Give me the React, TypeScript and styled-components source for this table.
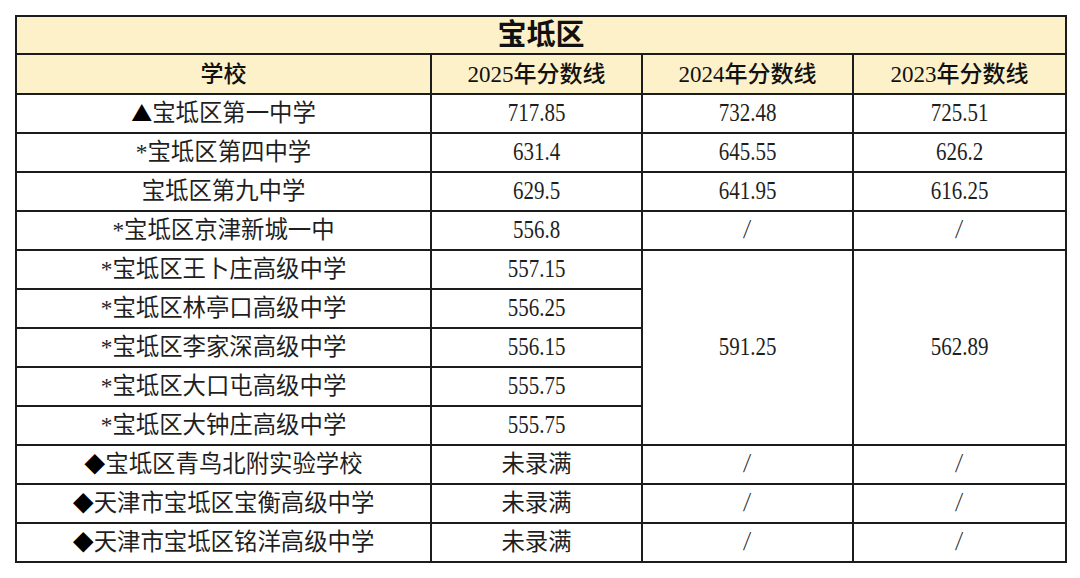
import React from "react";
import styled, { createGlobalStyle } from "styled-components";

const GlobalStyle = createGlobalStyle`
  html, body { margin: 0; padding: 0; background: #ffffff; }
  body { font-family: "Liberation Serif", "Noto Sans CJK SC", serif; }
`;

const Page = styled.div`
  padding: 15px 0 0 15px;
`;

const Table = styled.table`
  border-collapse: collapse;
  table-layout: fixed;
  width: 1050px;
  border: 2px solid #1c1c1c;
`;

const Col = styled.col<{ $w: number }>`
  width: ${(p) => p.$w}px;
`;

const Cell = styled.td`
  border: 2px solid #1c1c1c;
  height: 37px;
  padding: 0;
  text-align: center;
  vertical-align: middle;
  font-size: 23.4px;
  color: #1f1f1f;
  line-height: 1;
  white-space: nowrap;
`;

const Num = styled.span<{ $slash?: boolean }>`
  display: inline-block;
  font-size: ${(p) => (p.$slash ? 22 : 21)}px;
  transform: translateY(-2px) scaleY(1.24) ${(p) => (p.$slash ? "skewX(-8deg)" : "")};
`;

const Mark = styled.span`
  font-family: "Noto Sans CJK SC", sans-serif;
  font-size: 21px;
  color: #000;
`;

const TitleCell = styled.th`
  border: 2px solid #1c1c1c;
  background: #fdf1c9;
  height: 36px;
  padding: 0;
  font-size: 29px;
  font-weight: 700;
  color: #111;
  line-height: 1;
`;

const HeadCell = styled.th`
  border: 2px solid #1c1c1c;
  background: #fdf1c9;
  height: 38px;
  padding: 0;
  font-size: 23px;
  font-weight: 500;
  color: #111;
  line-height: 1;
  white-space: nowrap;
`;

type Row = { mark?: string; name: string; y25: string; y24?: string; y23?: string };

const rows: Row[] = [
  { mark: "▲", name: "宝坻区第一中学", y25: "717.85", y24: "732.48", y23: "725.51" },
  { name: "*宝坻区第四中学", y25: "631.4", y24: "645.55", y23: "626.2" },
  { name: "宝坻区第九中学", y25: "629.5", y24: "641.95", y23: "616.25" },
  { name: "*宝坻区京津新城一中", y25: "556.8", y24: "/", y23: "/" },
  { name: "*宝坻区王卜庄高级中学", y25: "557.15" },
  { name: "*宝坻区林亭口高级中学", y25: "556.25" },
  { name: "*宝坻区李家深高级中学", y25: "556.15" },
  { name: "*宝坻区大口屯高级中学", y25: "555.75" },
  { name: "*宝坻区大钟庄高级中学", y25: "555.75" },
  { mark: "◆", name: "宝坻区青鸟北附实验学校", y25: "未录满", y24: "/", y23: "/" },
  { mark: "◆", name: "天津市宝坻区宝衡高级中学", y25: "未录满", y24: "/", y23: "/" },
  { mark: "◆", name: "天津市宝坻区铭洋高级中学", y25: "未录满", y24: "/", y23: "/" },
];

const isNumeric = (v: string) => /^[\d./]+$/.test(v);

function Value({ v }: { v: string }) {
  return isNumeric(v) ? <Num $slash={v === "/"}>{v}</Num> : <>{v}</>;
}

export default function App() {
  return (
    <Page>
      <GlobalStyle />
      <Table>
        <colgroup>
          <Col $w={415} />
          <Col $w={211} />
          <Col $w={211} />
          <Col $w={213} />
        </colgroup>
        <thead>
          <tr>
            <TitleCell colSpan={4}>宝坻区</TitleCell>
          </tr>
          <tr>
            <HeadCell>学校</HeadCell>
            <HeadCell>2025年分数线</HeadCell>
            <HeadCell>2024年分数线</HeadCell>
            <HeadCell>2023年分数线</HeadCell>
          </tr>
        </thead>
        <tbody>
          {rows.map((r, i) => (
            <tr key={i}>
              <Cell>
                {r.mark && <Mark>{r.mark}</Mark>}
                {r.name}
              </Cell>
              <Cell>
                <Value v={r.y25} />
              </Cell>
              {r.y24 !== undefined ? (
                <>
                  <Cell>
                    <Value v={r.y24} />
                  </Cell>
                  <Cell>
                    <Value v={r.y23 ?? ""} />
                  </Cell>
                </>
              ) : i === 4 ? (
                <>
                  <Cell rowSpan={5}>
                    <Num>591.25</Num>
                  </Cell>
                  <Cell rowSpan={5}>
                    <Num>562.89</Num>
                  </Cell>
                </>
              ) : null}
            </tr>
          ))}
        </tbody>
      </Table>
    </Page>
  );
}
